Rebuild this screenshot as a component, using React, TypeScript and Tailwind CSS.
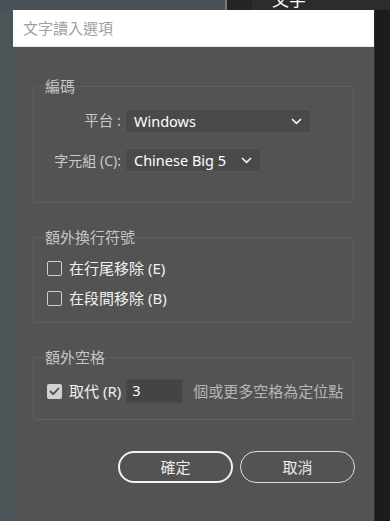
import React from "react";

const font = { fontFamily: '"Noto Sans", "Noto Sans CJK TC", sans-serif' };

function Chevron() {
  return (
    <svg width="11" height="7" viewBox="0 0 11 7" fill="none">
      <path d="M1.5 1.5 L5.5 5.3 L9.5 1.5" stroke="#f2f2f2" strokeWidth="1.7" strokeLinecap="round" strokeLinejoin="round" />
    </svg>
  );
}

function Select({ value, width }: { value: string; width: string }) {
  return (
    <div className={`${width} h-[24px] ml-[4px] flex items-center justify-between pl-[8px] pr-[8px] rounded-[3px] bg-[#4a4a4a] border border-[#575757]`}>
      <span className="text-[14.5px] text-white leading-none">{value}</span>
      <Chevron />
    </div>
  );
}

function Checkbox({ checked }: { checked?: boolean }) {
  if (checked) {
    return (
      <div className="w-[15px] h-[15px] rounded-[2px] bg-[#d2d2d2] flex items-center justify-center">
        <svg width="11" height="9" viewBox="0 0 11 9" fill="none">
          <path d="M1.5 4.5 L4.2 7.2 L9.5 1.5" stroke="#4e4e4e" strokeWidth="1.8" strokeLinecap="round" strokeLinejoin="round" />
        </svg>
      </div>
    );
  }
  return <div className="w-[15px] h-[15px] rounded-[2px] border-[1.5px] border-[#cfcfcf]" />;
}

export default function App() {
  return (
    <div className="w-[390px] h-[521px] overflow-hidden flex flex-col bg-[#1c1c1c]" style={font}>
      <div className="h-[10px] flex shrink-0 overflow-hidden">
        <div className="w-[225px] bg-[#475157]" />
        <div className="w-[2px] bg-[#7a7d7e]" />
        <div className="w-[25px] bg-[#242424]" />
        <div className="flex-1 bg-[#2c2c2c] pl-[20px]">
          <div className="text-[17px] leading-[17px] text-white mt-[-9px]">文字</div>
        </div>
      </div>
      <div className="flex flex-1">
        <div className="w-[13px] bg-[#4a5459]" />
        <div className="w-[361px] flex flex-col bg-[#535353]">
          <div className="h-[37px] bg-white flex items-center pl-[10px] border-b border-[#e6e6e6]">
            <span className="text-[15px] text-[#a0a0a0]">文字讀入選項</span>
          </div>
          <div className="pt-[29px] px-[20px] flex flex-col">
            <fieldset className="h-[127px] border border-[#5f5f5f] rounded-[3px] pl-[11px]">
              <legend className="text-[15px] leading-[20px] text-[#c4c4c4]">編碼</legend>
              <div className="mt-[13px] flex items-center">
                <div className="w-[76px] text-right text-[14.5px] text-[#c8c8c8]">平台 :</div>
                <Select value="Windows" width="w-[186px]" />
              </div>
              <div className="mt-[15px] flex items-center">
                <div className="w-[76px] text-right text-[14px] text-[#c8c8c8]">字元組 (C):</div>
                <Select value="Chinese Big 5" width="w-[136px]" />
              </div>
            </fieldset>
            <fieldset className="mt-[24px] h-[96px] border border-[#5f5f5f] rounded-[3px] pl-[11px]">
              <legend className="text-[15px] leading-[20px] text-[#c4c4c4]">額外換行符號</legend>
              <div className="mt-[11px] h-[20px] flex items-center gap-[7px] pl-[2px]">
                <Checkbox />
                <span className="text-[15px] text-[#f0f0f0]">在行尾移除 (E)</span>
              </div>
              <div className="mt-[10px] h-[20px] flex items-center gap-[7px] pl-[2px]">
                <Checkbox />
                <span className="text-[15px] text-[#f0f0f0]">在段間移除 (B)</span>
              </div>
            </fieldset>
            <fieldset className="mt-[24px] h-[73px] border border-[#5f5f5f] rounded-[3px] pl-[11px]">
              <legend className="text-[15px] leading-[20px] text-[#c4c4c4]">額外空格</legend>
              <div className="mt-[12px] h-[24px] flex items-center pl-[2px]">
                <Checkbox checked />
                <span className="ml-[7px] text-[15px] text-[#f0f0f0]">取代 (R)</span>
                <div className="ml-[5px] w-[57px] h-[24px] bg-[#444444] border border-[#4c4c4c] flex items-center pl-[5px]">
                  <span className="text-[14.5px] text-white">3</span>
                </div>
                <span className="ml-[10px] text-[15px] text-[#b6b6b6]">個或更多空格為定位點</span>
              </div>
            </fieldset>
            <div className="mt-[31px] flex justify-end gap-[7px] mr-[-1px]">
              <button className="w-[115px] h-[32px] rounded-full border-2 border-[#f2f2f2] text-[15px] text-[#ececec]">確定</button>
              <button className="w-[115px] h-[32px] rounded-full border-[1.5px] border-[#dcdcdc] text-[15px] text-[#ececec]">取消</button>
            </div>
          </div>
        </div>
        <div className="flex-1 bg-[#1c1c1c] border-l border-[#2a2a2a]" />
      </div>
    </div>
  );
}
